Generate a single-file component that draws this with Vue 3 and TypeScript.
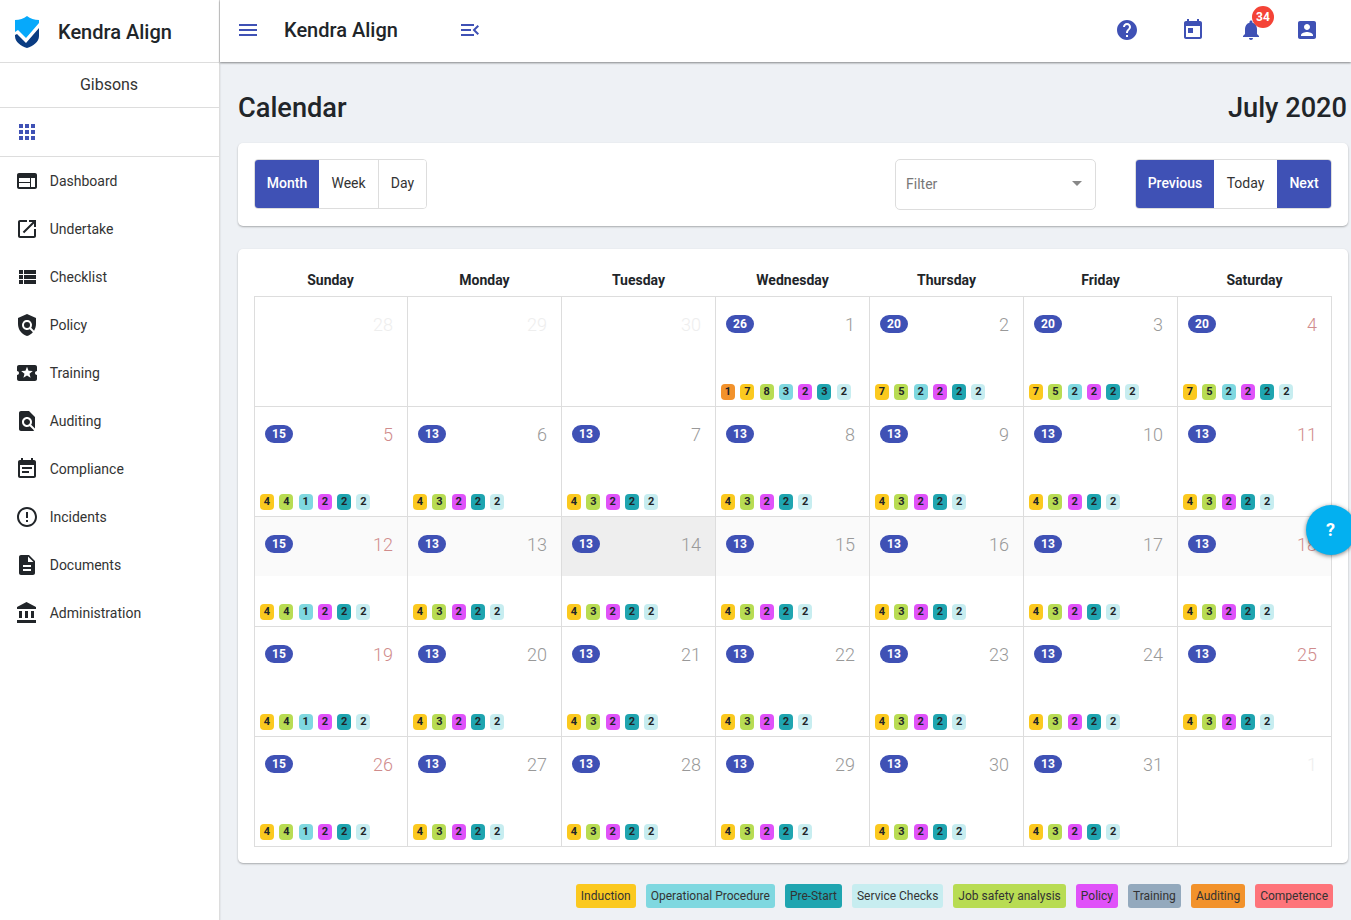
<script setup lang="ts">
interface NavItem {
  label: string;
  paths: string[];
}

interface Dot {
  kind: string;
  count: number;
}

interface DayCell {
  day: number;
  pill?: number;
  faded?: boolean;
  weekend: boolean;
  shaded?: boolean;
  today?: boolean;
  dots: Dot[];
}

const navItems: NavItem[] = [
  { label: 'Dashboard', paths: ['M20 4H4c-1.1 0-1.99.9-1.99 2L2 18c0 1.1.9 2 2 2h16c1.1 0 2-.9 2-2V6c0-1.1-.9-2-2-2zm-5 14H4v-4h11v4zm0-5H4V9h11v4zm5 5h-4V9h4v9z'] },
  { label: 'Undertake', paths: ['M19 19H5V5h7V3H5c-1.11 0-2 .9-2 2v14c0 1.1.89 2 2 2h14c1.1 0 2-.9 2-2v-7h-2v7zM14 3v2h3.59l-9.83 9.83 1.41 1.41L19 6.41V10h2V3h-7z'] },
  { label: 'Checklist', paths: ['M4 14h4v-4H4v4zm0 5h4v-4H4v4zM4 9h4V5H4v4zm5 5h12v-4H9v4zm0 5h12v-4H9v4zM9 5v4h12V5H9z'] },
  { label: 'Policy', paths: ['M21,5l-9-4L3,5v6c0,5.55,3.84,10.74,9,12c2.3-0.56,4.33-1.9,5.88-3.71l-3.12-3.12c-1.94,1.29-4.58,1.07-6.29-0.64c-1.95-1.95-1.95-5.12,0-7.07c1.95-1.95,5.12-1.95,7.07,0c1.71,1.71,1.92,4.35,0.64,6.29l2.9,2.9C20.29,15.69,21,13.38,21,11V5z', 'M12 9a3 3 0 1 0 0 6a3 3 0 1 0 0-6z'] },
  { label: 'Training', paths: ['M20 12c0-1.1.9-2 2-2V6c0-1.1-.9-2-2-2H4c-1.1 0-1.99.9-1.99 2v4c1.1 0 1.99.9 1.99 2s-.89 2-2 2v4c0 1.1.9 2 2 2h16c1.1 0 2-.9 2-2v-4c-1.1 0-2-.9-2-2zm-4.42 4.8L12 14.5l-3.58 2.3 1.08-4.12-3.29-2.69 4.24-.25L12 5.8l1.54 3.95 4.24.25-3.29 2.69 1.09 4.11z'] },
  { label: 'Auditing', paths: ['M20 19.59V8l-6-6H6c-1.1 0-1.99.9-1.99 2L4 20c0 1.1.89 2 1.99 2H18c.45 0 .85-.15 1.19-.4l-4.43-4.43c-.8.52-1.74.83-2.76.83-2.76 0-5-2.24-5-5s2.24-5 5-5 5 2.24 5 5c0 1.02-.31 1.96-.83 2.75L20 19.59zM9 13c0 1.66 1.34 3 3 3s3-1.34 3-3-1.34-3-3-3-3 1.34-3 3z'] },
  { label: 'Compliance', paths: ['M17 10H7v2h10v-2zm2-7h-1V1h-2v2H8V1H6v2H5c-1.11 0-1.99.9-1.99 2L3 19c0 1.1.89 2 2 2h14c1.1 0 2-.9 2-2V5c0-1.1-.9-2-2-2zm0 16H5V8h14v11zm-5-5H7v2h7v-2z'] },
  { label: 'Incidents', paths: ['M11 15h2v2h-2zm0-8h2v6h-2zm.99-5C6.47 2 2 6.48 2 12s4.47 10 9.99 10C17.52 22 22 17.52 22 12S17.52 2 11.99 2zM12 20c-4.42 0-8-3.58-8-8s3.58-8 8-8 8 3.58 8 8-3.58 8-8 8z'] },
  { label: 'Documents', paths: ['M14 2H6c-1.1 0-1.99.9-1.99 2L4 20c0 1.1.89 2 1.99 2H18c1.1 0 2-.9 2-2V8l-6-6zm2 16H8v-2h8v2zm0-4H8v-2h8v2zm-3-5V3.5L18.5 9H13z'] },
  { label: 'Administration', paths: ['M4 10v7h3v-7H4zm6 0v7h3v-7h-3zM2 22h19v-3H2v3zm14-12v7h3v-7h-3zm-4.5-9L2 6v2h19V6l-9.5-5z'] },
];

const weekdays = ['Sunday', 'Monday', 'Tuesday', 'Wednesday', 'Thursday', 'Friday', 'Saturday'];

const legend = [
  { label: 'Induction', kind: 'induction' },
  { label: 'Operational Procedure', kind: 'operational' },
  { label: 'Pre-Start', kind: 'prestart' },
  { label: 'Service Checks', kind: 'service' },
  { label: 'Job safety analysis', kind: 'jsa' },
  { label: 'Policy', kind: 'policy' },
  { label: 'Training', kind: 'training' },
  { label: 'Auditing', kind: 'auditing' },
  { label: 'Competence', kind: 'competence' },
];

const mk = (list: [string, number][]): Dot[] => list.map(([kind, count]) => ({ kind, count }));

const sundayDots = mk([['induction', 4], ['jsa', 4], ['operational', 1], ['policy', 2], ['prestart', 2], ['service', 2]]);
const weekDots = mk([['induction', 4], ['jsa', 3], ['policy', 2], ['prestart', 2], ['service', 2]]);
const firstDots = mk([['auditing', 1], ['induction', 7], ['jsa', 8], ['operational', 3], ['policy', 2], ['prestart', 3], ['service', 2]]);
const earlyDots = mk([['induction', 7], ['jsa', 5], ['operational', 2], ['policy', 2], ['prestart', 2], ['service', 2]]);

const cells: DayCell[] = [];
const dayList = [28, 29, 30, ...Array.from({ length: 31 }, (_, i) => i + 1), 1];
dayList.forEach((day, i) => {
  const col = i % 7;
  const weekend = col === 0 || col === 6;
  const faded = i < 3 || i === 34;
  if (faded) {
    cells.push({ day, faded, weekend, dots: [] });
    return;
  }
  let pill = 13;
  let dots = col === 0 ? sundayDots : weekDots;
  if (i < 7) {
    pill = day === 1 ? 26 : 20;
    dots = day === 1 ? firstDots : earlyDots;
  } else if (col === 0) {
    pill = 15;
  }
  cells.push({ day, pill, weekend, dots, shaded: i >= 14 && i < 21, today: day === 14 });
});
</script>

<template>
  <div class="app">
    <aside class="sidebar">
      <div class="brand">
        <svg class="logo" width="26" height="34" viewBox="0 0 26 34">
          <path d="M1 5Q8 5 13 1Q18 5 25 5V8L12 23L4 15L1 17Z" fill="#06a9fb" />
          <path d="M1 20L3 19L12 28L25 13V21C25 27 19 31 13 33C7 31 1 27 1 21Z" fill="#0a3c82" />
        </svg>
        <span class="brand-name">Kendra Align</span>
      </div>
      <div class="site">Gibsons</div>
      <div class="apps-row">
        <svg width="24" height="24" viewBox="0 0 24 24" fill="#3f51b5"><path d="M4 8h4V4H4v4zm6 12h4v-4h-4v4zm-6 0h4v-4H4v4zm0-6h4v-4H4v4zm6 0h4v-4h-4v4zm6-10v4h4V4h-4zm-6 4h4V4h-4v4zm6 6h4v-4h-4v4zm0 6h4v-4h-4v4z" /></svg>
      </div>
      <nav class="nav">
        <a v-for="item in navItems" :key="item.label" class="nav-item">
          <svg width="24" height="24" viewBox="0 0 24 24" fill="#212529"><path v-for="d in item.paths" :key="d" :d="d" /></svg>
          <span>{{ item.label }}</span>
        </a>
      </nav>
    </aside>

    <div class="main">
      <header class="topbar">
        <svg class="tb-menu" width="24" height="24" viewBox="0 0 24 24" fill="#3f51b5"><path d="M3 18h18v-2H3v2zm0-5h18v-2H3v2zm0-7v2h18V6H3z" /></svg>
        <span class="brand-name tb-title">Kendra Align</span>
        <svg class="tb-open" width="24" height="24" viewBox="0 0 24 24" fill="#3f51b5"><path d="M3 18h13v-2H3v2zm0-5h10v-2H3v2zm0-7v2h13V6H3zm18 9.59L17.42 12 21 8.41 19.59 7l-5 5 5 5L21 15.59z" /></svg>
        <div class="tb-icons">
          <svg class="ic-help" width="24" height="24" viewBox="0 0 24 24" fill="#3f51b5"><path d="M12 2C6.48 2 2 6.48 2 12s4.48 10 10 10 10-4.48 10-10S17.52 2 12 2zm1 17h-2v-2h2v2zm2.07-7.75l-.9.92C13.45 12.9 13 13.5 13 15h-2v-.5c0-1.1.45-2.1 1.17-2.83l1.24-1.26c.37-.36.59-.86.59-1.41 0-1.1-.9-2-2-2s-2 .9-2 2H8c0-2.21 1.79-4 4-4s4 1.79 4 4c0 .88-.36 1.68-.93 2.25z" /></svg>
          <svg class="ic-cal" width="24" height="24" viewBox="0 0 24 24" fill="#3f51b5"><path d="M19 3h-1V1h-2v2H8V1H6v2H5c-1.11 0-1.99.9-1.99 2L3 19c0 1.1.89 2 2 2h14c1.1 0 2-.9 2-2V5c0-1.1-.9-2-2-2zm0 16H5V8h14v11zM7 10h5v5H7z" /></svg>
          <div class="bell">
            <svg width="24" height="24" viewBox="0 0 24 24" fill="#3f51b5"><path d="M12 22c1.1 0 2-.9 2-2h-4c0 1.1.89 2 2 2zm6-6v-5c0-3.07-1.64-5.64-4.5-6.32V4c0-.83-.67-1.5-1.5-1.5s-1.5.67-1.5 1.5v.68C7.63 5.36 6 7.92 6 11v5l-2 2v1h16v-1l-2-2z" /></svg>
            <span class="bell-badge">34</span>
          </div>
          <svg class="ic-user" width="24" height="24" viewBox="0 0 24 24" fill="#3f51b5"><path d="M3 5v14c0 1.1.89 2 2 2h14c1.1 0 2-.9 2-2V5c0-1.1-.9-2-2-2H5c-1.11 0-2 .9-2 2zm12 4c0 1.66-1.34 3-3 3s-3-1.34-3-3 1.34-3 3-3 3 1.34 3 3zm-9 8c0-2 4-3.1 6-3.1s6 1.1 6 3.1v1H6v-1z" /></svg>
        </div>
      </header>

      <main class="content">
        <div class="page-head">
          <h1>Calendar</h1>
          <h1>July 2020</h1>
        </div>

        <section class="card toolbar">
          <div class="btn-group">
            <button class="btn primary month">Month</button>
            <button class="btn week">Week</button>
            <button class="btn day">Day</button>
          </div>
          <div class="filter">
            <span>Filter</span>
            <i class="caret"></i>
          </div>
          <div class="btn-group">
            <button class="btn primary prev">Previous</button>
            <button class="btn today-btn">Today</button>
            <button class="btn primary next">Next</button>
          </div>
        </section>

        <section class="card calendar">
          <div class="weekdays">
            <div v-for="w in weekdays" :key="w" class="weekday">{{ w }}</div>
          </div>
          <div class="grid">
            <div v-for="(c, i) in cells" :key="i" class="cell">
              <div class="cell-top" :class="{ shaded: c.shaded, today: c.today }">
                <span v-if="c.pill" class="pill">{{ c.pill }}</span>
                <span class="num" :class="{ weekend: c.weekend, faded: c.faded }">{{ c.day }}</span>
              </div>
              <div class="dots">
                <span v-for="(d, j) in c.dots" :key="j" class="dot" :class="d.kind">{{ d.count }}</span>
              </div>
            </div>
          </div>
        </section>

        <div class="legend">
          <span v-for="l in legend" :key="l.kind" class="legend-item" :class="l.kind">{{ l.label }}</span>
        </div>
      </main>
    </div>

    <div class="help-fab">?</div>
  </div>
</template>

<style scoped>
.app { display: flex; height: 920px; overflow: hidden; position: relative; font-family: Roboto, "Liberation Sans", sans-serif; color: #212529; background: #eef1f5; }
.sidebar { width: 219px; flex: none; background: #fff; border-right: 1px solid #ddd; box-shadow: 1px 0 1px rgba(0, 0, 0, 0.04); }
.brand { height: 60px; padding-top: 2px; display: flex; align-items: center; padding-left: 14px; border-bottom: 1px solid #ddd; }
.logo { margin-right: 18px; }
.brand-name { font-size: 20px; font-weight: 500; color: #212529; white-space: nowrap; }
.site { height: 44px; line-height: 44px; text-align: center; font-size: 16px; color: #333; border-bottom: 1px solid #ddd; padding-right: 1px; }
.apps-row { height: 48px; display: flex; align-items: center; padding-left: 15px; border-bottom: 1px solid #ddd; }
.nav { display: flex; flex-direction: column; }
.nav-item { height: 48px; display: flex; align-items: center; padding-left: 15px; gap: 10.7px; font-size: 14px; color: #333; }
.main { flex: 1; min-width: 0; display: flex; flex-direction: column; }
.topbar { height: 60px; padding-bottom: 2px; flex: none; background: #fff; display: flex; align-items: center; padding-left: 16px; box-shadow: 0 1px 2px rgba(0, 0, 0, 0.45); position: relative; }
.tb-title { margin-left: 24px; }
.tb-open { margin-left: 60px; }
.tb-icons { margin-left: auto; margin-right: 32px; display: flex; align-items: center; }
.ic-cal { margin-left: 42px; }
.bell { margin-left: 34px; position: relative; height: 24px; }
.ic-user { margin-left: 32px; }
.bell-badge { position: absolute; left: 13px; top: -12px; width: 22px; height: 22px; border-radius: 50%; background: #f44336; color: #fff; font-size: 12px; font-weight: 700; line-height: 22px; text-align: center; }
.content { flex: 1; padding: 0 3px 0 18px; }
.page-head { display: flex; justify-content: space-between; align-items: center; height: 71px; padding-top: 10px; padding-right: 1px; }
.page-head h1 { margin: 0; font-size: 27.2px; font-weight: 500; color: #212529; }
.card { background: #fff; border-radius: 5px; box-shadow: 0 1px 2px rgba(0, 0, 0, 0.3); }
.toolbar { height: 83px; box-sizing: border-box; padding: 16px; display: flex; align-items: flex-start; margin-bottom: 23px; }
.btn-group { display: flex; height: 50px; box-sizing: border-box; border: 1px solid #ddd; border-radius: 4px; overflow: hidden; background: #fff; }
.btn { border: 0; padding: 0 0 2px; background: #fff; font-family: inherit; font-size: 14px; color: #333; height: 100%; }
.btn.primary { background: #3f51b5; color: #fff; font-weight: 500; }
.month { width: 64px; }
.week { width: 60px; border-right: 1px solid #ddd; }
.day { width: 47px; }
.prev { width: 78px; }
.today-btn { width: 63px; }
.next { width: 54px; }
.filter { margin-left: auto; margin-right: 39px; width: 201px; height: 51px; box-sizing: border-box; border: 1px solid #ddd; border-radius: 5px; display: flex; align-items: center; justify-content: space-between; padding: 0 13px 2px 10px; font-size: 14px; color: #777; }
.caret { width: 0; height: 0; border-left: 5px solid transparent; border-right: 5px solid transparent; border-top: 5px solid #888; }
.calendar { height: 614px; box-sizing: border-box; padding: 16px 16px 0; }
.weekdays { display: grid; grid-template-columns: repeat(7, 154px); height: 31px; margin-left: -0.5px; }
.weekday { text-align: center; font-size: 14px; font-weight: 700; line-height: 31px; color: #212529; }
.grid { display: grid; grid-template-columns: repeat(7, 154px); border-top: 1px solid #ddd; width: 1078px; }
.cell { height: 110px; box-sizing: border-box; border-right: 1px solid #ddd; border-bottom: 1px solid #ddd; display: flex; flex-direction: column; }
.cell:nth-child(7n + 1) { border-left: 1px solid #ddd; }
.cell-top { height: 59px; padding: 18px 14px 0 10px; display: flex; align-items: flex-start; justify-content: space-between; box-sizing: border-box; }
.cell-top.shaded { background: #fafafa; }
.cell-top.today { background: #eee; }
.pill { width: 28px; height: 18px; border-radius: 9px; background: #3f51b5; color: #fff; font-size: 12px; font-weight: 700; line-height: 18px; text-align: center; }
.num { margin-left: auto; margin-top: 1px; font-size: 18px; font-weight: 300; line-height: 18px; color: #999; }
.num.weekend { color: #d08c8c; }
.num.faded { color: #eee; }
.dots { display: flex; gap: 5.3px; padding: 28px 0 0 5px; }
.dot { width: 14px; height: 16px; border-radius: 4px; font-size: 11px; font-weight: 700; line-height: 16px; text-align: center; color: #212529; }
.induction { background: #fbc91f; }
.operational { background: #7fd8e0; }
.prestart { background: #1fa5b0; }
.service { background: #c7edf0; }
.jsa { background: #b8dc53; }
.policy { background: #e052f9; }
.training { background: #93a9bd; }
.auditing { background: #f2922b; }
.competence { background: #fe747a; }
.legend { display: flex; justify-content: flex-end; gap: 10px; margin-top: 21px; padding-right: 15px; }
.legend-item { height: 24px; line-height: 24px; padding: 0 5px; border-radius: 3px; font-size: 12px; color: #333; }
.help-fab { position: absolute; left: 1306px; top: 505px; width: 50px; height: 50px; border-radius: 50%; background: #03b0f0; color: #fff; font-size: 18px; font-weight: 700; line-height: 50px; text-align: center; box-sizing: border-box; padding-right: 1px; box-shadow: 0 1px 4px rgba(0, 0, 0, 0.5); }
</style>

<style>
html, body { margin: 0; overflow: hidden; }
</style>
